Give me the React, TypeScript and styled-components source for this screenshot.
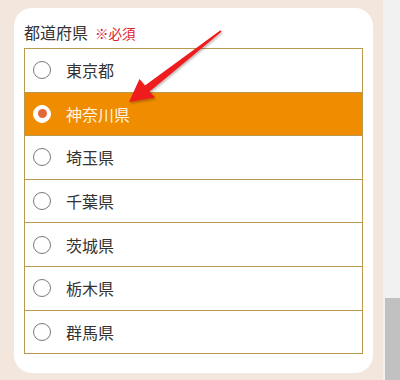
import React, { useState } from "react";
import styled, { createGlobalStyle } from "styled-components";

const GlobalStyle = createGlobalStyle`
  html, body {
    margin: 0;
    padding: 0;
    background: #f3e6dd;
    font-family: "Noto Sans CJK JP", "Noto Sans", sans-serif;
  }
`;

const Page = styled.div`
  position: relative;
  width: 400px;
  height: 380px;
  display: flex;
  overflow: hidden;
`;

const Main = styled.div`
  width: 383px;
  padding: 8px 10px 0 14px;
  box-sizing: border-box;
`;

const ScrollTrack = styled.div`
  width: 17px;
  height: 380px;
  background: #f1f1f1;
  display: flex;
  flex-direction: column;
  justify-content: flex-end;
  align-items: flex-end;
`;

const ScrollThumb = styled.div`
  width: 15px;
  height: 82px;
  background: #c1c1c1;
`;

const Card = styled.div`
  background: #fff;
  border-radius: 18px;
  padding: 12px 10px 19px 10px;
`;

const Label = styled.div`
  display: flex;
  align-items: baseline;
  gap: 7px;
  height: 24px;
  line-height: 24px;
  margin-bottom: 4px;
  font-size: 16px;
  color: #333;
`;

const Required = styled.span`
  font-size: 13.5px;
  color: #e0202a;
`;

const List = styled.div`
  border-bottom: 1px solid #b99a4c;
`;

const Row = styled.label<{ $active: boolean }>`
  box-sizing: border-box;
  height: 43.6px;
  display: flex;
  align-items: center;
  gap: 15px;
  padding-left: 8px;
  border: 1px solid #b99a4c;
  border-bottom: none;
  background: ${(p) => (p.$active ? "#ef8c00" : "#fff")};
  color: ${(p) => (p.$active ? "#fff4e0" : "#333")};
  font-size: 16px;
  cursor: pointer;
`;

const Radio = styled.span<{ $active: boolean }>`
  box-sizing: border-box;
  width: 18px;
  height: 18px;
  border-radius: 50%;
  background: #fff;
  border: 1px solid ${(p) => (p.$active ? "#fff" : "#7a7a7a")};
  display: flex;
  align-items: center;
  justify-content: center;
  flex-shrink: 0;
`;

const Dot = styled.span`
  width: 9px;
  height: 9px;
  border-radius: 50%;
  background: #e3673a;
`;

const Arrow = styled.svg`
  position: absolute;
  left: 0;
  top: 0;
  pointer-events: none;
`;

const prefectures = ["東京都", "神奈川県", "埼玉県", "千葉県", "茨城県", "栃木県", "群馬県"];

const App = () => {
  const [selected, setSelected] = useState("神奈川県");

  return (
    <>
      <GlobalStyle />
      <Page>
        <Main>
          <Card>
            <Label>
              都道府県<Required>※必須</Required>
            </Label>
            <List>
              {prefectures.map((name) => {
                const active = name === selected;
                return (
                  <Row key={name} $active={active} onClick={() => setSelected(name)}>
                    <Radio $active={active}>{active && <Dot />}</Radio>
                    {name}
                  </Row>
                );
              })}
            </List>
          </Card>
        </Main>
        <ScrollTrack>
          <ScrollThumb />
        </ScrollTrack>
        <Arrow width="400" height="380" viewBox="0 0 400 380">
          <defs>
            <filter id="shadow" x="-20%" y="-20%" width="140%" height="140%">
              <feDropShadow dx="1" dy="1.5" stdDeviation="1.2" floodColor="#000" floodOpacity="0.3" />
            </filter>
          </defs>
          <polygon
            points="129,102 155,97.5 149.6,91.4 221.5,31.7 220.5,30.3 145,85.6 139.5,79"
            fill="#ee1a1a"
            filter="url(#shadow)"
          />
        </Arrow>
      </Page>
    </>
  );
};

export default App;
